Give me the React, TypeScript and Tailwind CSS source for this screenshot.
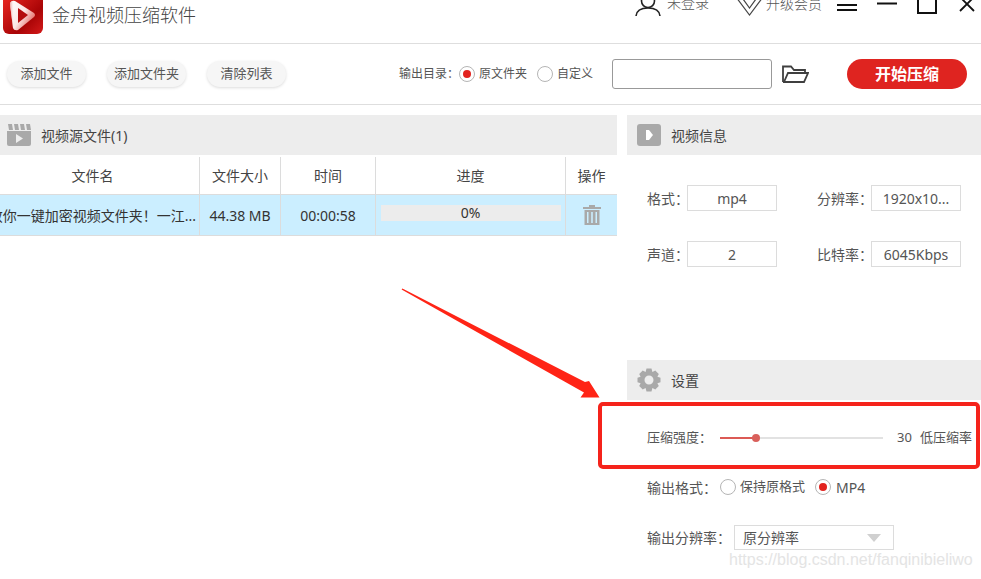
const font = "[font-family:'Noto_Sans','Noto_Sans_CJK_SC',sans-serif]";

function Radio({ checked }: { checked?: boolean }) {
  return (
    <span className="flex h-4 w-4 shrink-0 items-center justify-center rounded-full border border-[#b5b5b5] bg-white">
      {checked && <span className="h-2 w-2 rounded-full bg-[#e2231f]" />}
    </span>
  );
}

function ToolButton({ label }: { label: string }) {
  return (
    <button className="flex h-[26px] w-[79px] items-center justify-center rounded-[13px] bg-[#f6f6f6] text-[13px] text-[#555] shadow-[0_1px_3px_rgba(0,0,0,0.14)]">
      {label}
    </button>
  );
}

function Logo() {
  return (
    <svg width="40" height="34" viewBox="0 0 40 34" className="shrink-0">
      <defs>
        <linearGradient id="logoBg" x1="0" y1="0" x2="1" y2="1">
          <stop offset="0" stopColor="#ee2a24" />
          <stop offset="0.65" stopColor="#a80406" />
          <stop offset="1" stopColor="#d41a1a" />
        </linearGradient>
        <linearGradient id="logoSwoosh" x1="0" y1="0" x2="1" y2="0.7">
          <stop offset="0" stopColor="#fff" />
          <stop offset="0.55" stopColor="#fbe6e5" />
          <stop offset="1" stopColor="#e25a56" />
        </linearGradient>
        <linearGradient id="logoInner" x1="0" y1="0" x2="1" y2="0">
          <stop offset="0" stopColor="#e8a09d" />
          <stop offset="0.55" stopColor="#fff" stopOpacity="0" />
        </linearGradient>
      </defs>
      <path d="M0 -6H40V28a6 6 0 0 1-6 6H6a6 6 0 0 1-6-6Z" fill="url(#logoBg)" />
      <path d="M7 4Q8 0 12 1L31 13Q33 15 31 17L15 30Q11 31 10 28Z" fill="url(#logoSwoosh)" />
      <path d="M7 4Q8 0 12 1L15 8 15 23 15 30Q11 31 10 28Z" fill="url(#logoInner)" />
      <path d="M15 8 25 15 15 23Z" fill="#b40c0e" />
    </svg>
  );
}

function TitleBar() {
  return (
    <div className="flex h-[43px] items-start overflow-hidden">
      <div className="ml-[3px]">
        <Logo />
      </div>
      <span className="ml-[9px] mt-[2px] text-[18px] leading-[26px] font-light text-[#444]">金舟视频压缩软件</span>
      <div className="ml-auto flex items-start">
        <svg width="26" height="16" viewBox="0 0 26 16" fill="none" stroke="#222" strokeWidth="1.6">
          <circle cx="13" cy="1" r="6.5" />
          <path d="M1 16C1.5 11 6 8 13 8s11.5 3 12 8" />
        </svg>
        <span className="ml-[6px] mt-[-6px] text-[14px] leading-[18px] font-light text-[#555]">未登录</span>
        <svg className="ml-[28px]" width="25" height="16" viewBox="0 0 25 16" fill="none" stroke="#444" strokeWidth="1.2">
          <path d="M0.5 -1 12.5 15 24.5 -1" />
          <path d="M6 -1 12.5 8 19 -1" />
        </svg>
        <span className="ml-[4px] mt-[-5px] text-[14px] leading-[18px] font-light text-[#555]">升级会员</span>
        <svg className="ml-[15px]" width="20" height="12" viewBox="0 0 20 12" fill="none" stroke="#111" strokeWidth="2">
          <path d="M0 5H20M0 10H20" />
        </svg>
        <svg className="ml-[20px]" width="20" height="6" viewBox="0 0 20 6" fill="none" stroke="#111" strokeWidth="2">
          <path d="M0 3.5H20" />
        </svg>
        <svg className="ml-[20px]" width="20" height="14" viewBox="0 0 20 14" fill="none" stroke="#111" strokeWidth="2">
          <path d="M1 -2V13H19V-2" />
        </svg>
        <svg className="ml-[22px] mr-[6px]" width="16" height="12" viewBox="0 0 16 12" fill="none" stroke="#111" strokeWidth="1.8">
          <path d="M1 -3 15 11M15 -3 1 11" />
        </svg>
      </div>
    </div>
  );
}

function ToolBar() {
  return (
    <div className="flex h-[62px] items-center border-y border-[#dedede] pl-[7px]">
      <div className="flex gap-[21px]">
        <ToolButton label="添加文件" />
        <ToolButton label="添加文件夹" />
        <ToolButton label="清除列表" />
      </div>
      <span className="ml-[113px] text-[12px] text-[#555]">输出目录：</span>
      <div className="flex items-center text-[12px] text-[#555]">
        <Radio checked />
        <span className="ml-[4px]">原文件夹</span>
        <span className="ml-[10px]">
          <Radio />
        </span>
        <span className="ml-[4px]">自定义</span>
      </div>
      <div className="ml-[19px] h-[30px] w-[160px] rounded-[3px] border border-[#999] bg-white" />
      <svg className="ml-[10px]" width="27" height="19" viewBox="0 0 27 19" fill="none" stroke="#3f3f3f" strokeWidth="1.8">
        <path d="M1 17V1.5H9L12 5H23V8" />
        <path d="M1 17H22L26 8H6L2 17" />
      </svg>
      <button className="ml-[38px] flex h-[30px] w-[120px] items-center justify-center rounded-[15px] bg-[#df2420] text-[16px] font-bold text-white">
        开始压缩
      </button>
    </div>
  );
}

function SectionHeader({ icon, title }: { icon: React.ReactNode; title: string }) {
  return (
    <div className="flex h-10 items-center bg-[#ededed] text-[14px] text-[#444]">
      {icon}
      <span>{title}</span>
    </div>
  );
}

function FileTable() {
  const cell = "flex items-center justify-center border-r border-[#dcdcdc]";
  return (
    <div className="text-[14px] text-[#444]">
      <div className="flex h-10 border-b border-[#dcdcdc] pt-[2px]">
        <div className={`${cell} w-[200px] pr-[14px]`}>文件名</div>
        <div className={`${cell} w-[81px]`}>文件大小</div>
        <div className={`${cell} w-[95px]`}>时间</div>
        <div className={`${cell} w-[190px]`}>进度</div>
        <div className="flex flex-1 items-center justify-center">操作</div>
      </div>
      <div className="flex h-[41px] border-b border-[#dcdcdc] bg-[#cbeeff] text-[#333]">
        <div className={`${cell} w-[200px] !justify-end overflow-hidden pr-[3px]`}>
          <span className="whitespace-nowrap">教你一键加密视频文件夹！一江...</span>
        </div>
        <div className={`${cell} w-[81px]`}>44.38 MB</div>
        <div className={`${cell} w-[95px]`}>00:00:58</div>
        <div className={`${cell} w-[190px]`}>
          <div className="mt-[-4px] flex h-4 w-[180px] items-center justify-center bg-[#ececec] leading-4">0%</div>
        </div>
        <div className="flex flex-1 items-center justify-center">
          <svg width="18" height="20" viewBox="0 0 18 20" fill="#a9a9a9">
            <path d="M6 0H12V2H18V4H0V2H6Z" />
            <path d="M1.5 5H16.5V20H1.5ZM4 7V18H5.5V7ZM8.2 7V18H9.8V7ZM12.5 7V18H14V7Z" fillRule="evenodd" />
          </svg>
        </div>
      </div>
    </div>
  );
}

function InfoField({ label, value, labelWidth }: { label: string; value: string; labelWidth: string }) {
  return (
    <div className="flex items-center text-[14px] text-[#555]">
      <span className={`${labelWidth} shrink-0 whitespace-nowrap`}>{label}</span>
      <div className="flex h-[26px] w-[90px] shrink-0 items-center justify-center border border-[#dcdcdc] bg-white">{value}</div>
    </div>
  );
}

function SettingsPanel() {
  return (
    <div className="mt-[93px]">
      <SectionHeader
        title="设置"
        icon={
          <svg className="ml-[10px] mr-[10px]" width="24" height="24" viewBox="0 0 24 24" fill="#a9a9a9">
            <path
              fillRule="evenodd"
              d="M9.5 0.5H14.5L15.4 4 18.3 2.4 21.8 5.9 20.4 8.8 23.5 9.7V14.3L20.4 15.2 21.8 18.1 18.3 21.6 15.4 20 14.5 23.5H9.5L8.6 20 5.7 21.6 2.2 18.1 3.6 15.2 0.5 14.3V9.7L3.6 8.8 2.2 5.9 5.7 2.4 8.6 4ZM12 7.5a4.5 4.5 0 1 0 0 9 4.5 4.5 0 0 0 0-9Z"
            />
          </svg>
        }
      />
      <div className="flex h-[75px] items-center pl-5 text-[13px] text-[#555]">
        <span className="w-[73px] whitespace-nowrap">压缩强度：</span>
        <div className="relative h-[2px] w-[163px] bg-[#e2e2e2]">
          <div className="h-full w-[36px] bg-[#dc5a55]" />
          <span className="absolute left-[32px] top-[-3px] h-2 w-2 rounded-full bg-[#d9605b]" />
        </div>
        <span className="ml-[14px]">30</span>
        <span className="ml-2">低压缩率</span>
      </div>
      <div className="mt-[2px] flex h-5 items-center pl-5 text-[14px] text-[#555]">
        <span className="w-[73px] shrink-0 whitespace-nowrap">输出格式：</span>
        <Radio />
        <span className="ml-[4px] text-[13px]">保持原格式</span>
        <span className="ml-[10px]">
          <Radio checked />
        </span>
        <span className="ml-[5px]">MP4</span>
      </div>
      <div className="mt-[28px] flex items-center pl-5 text-[14px] text-[#555]">
        <span className="w-[87px] shrink-0 whitespace-nowrap">输出分辨率：</span>
        <div className="flex h-[25px] w-[160px] items-center justify-between border border-[#dcdcdc] bg-white pl-2 pr-[12px]">
          <span>原分辨率</span>
          <span className="h-0 w-0 border-x-[7px] border-t-[8px] border-x-transparent border-t-[#d0d0d0]" />
        </div>
      </div>
    </div>
  );
}

function InfoPanel() {
  return (
    <div>
      <SectionHeader
        title="视频信息"
        icon={
          <svg className="ml-[10px] mr-[10px]" width="24" height="22" viewBox="0 0 24 22">
            <rect width="24" height="22" rx="3" fill="#a9a9a9" />
            <path d="M9 6h3l4 5-4 5H9Z" fill="#fff" />
          </svg>
        }
      />
      <div className="grid grid-cols-[170px_1fr] gap-y-[30px] pl-5 pt-[30px]">
        <InfoField label="格式：" value="mp4" labelWidth="w-10" />
        <InfoField label="分辨率：" value="1920x10..." labelWidth="w-[54px]" />
        <InfoField label="声道：" value="2" labelWidth="w-10" />
        <InfoField label="比特率：" value="6045Kbps" labelWidth="w-[54px]" />
      </div>
    </div>
  );
}

export default function App() {
  return (
    <div className={`relative h-[579px] w-[981px] overflow-hidden bg-white ${font}`}>
      <TitleBar />
      <ToolBar />
      <div className="mt-[10px] flex gap-[10px]">
        <div className="w-[617px] shrink-0">
          <SectionHeader
            title="视频源文件(1)"
            icon={
              <svg className="ml-[7px] mr-[10px]" width="24" height="22" viewBox="0 0 24 22" fill="#a9a9a9">
                <path d="M1 0H5L6 6H2ZM7 0H11L12 6H8ZM13 0H17L18 6H14ZM19 0H23L24 6H20Z" />
                <path fillRule="evenodd" d="M0 7H24V20a2 2 0 0 1-2 2H2a2 2 0 0 1-2-2ZM9 10V19L16 14.5Z" />
              </svg>
            }
          />
          <FileTable />
        </div>
        <div className="flex-1">
          <InfoPanel />
          <SettingsPanel />
        </div>
      </div>

      {/* red annotation drawn over the screenshot */}
      <svg className="absolute left-[395px] top-[285px]" width="210" height="116" viewBox="395 285 210 116" fill="#ff2416">
        <path d="M402.4 288.6 585 382 589 381 599.5 397.5 580.5 397.5 584 392.5 401.6 289.6Z" />
      </svg>
      <div className="absolute left-[598px] top-[402px] h-[67px] w-[382px] rounded-[5px] border-[4px] border-[#f5231b]" />

      <span className="absolute left-[729px] top-[550px] text-[16px] leading-5 text-[#e4e4e4] [font-family:'Liberation_Sans',sans-serif]">
        https://blog.csdn.net/fanqinibieliwo
      </span>
    </div>
  );
}
